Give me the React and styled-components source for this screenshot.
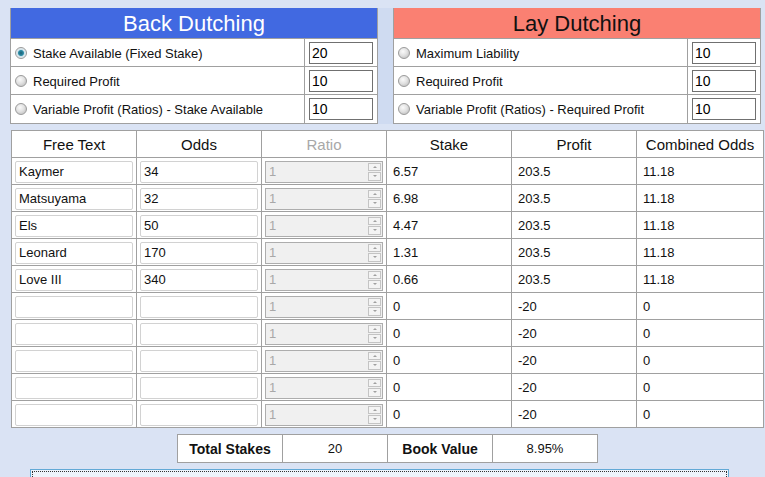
import styled, { createGlobalStyle } from 'styled-components';

const GlobalStyle = createGlobalStyle`
  body {
    margin: 0;
    background: #dae3f4;
    font-family: "Liberation Sans", Arial, sans-serif;
    overflow: hidden;
  }
`;

const Page = styled.div`
  width: 765px;
  height: 477px;
  padding: 8px 0 0 10px;
  box-sizing: border-box;
`;

const TopRow = styled.div`
  display: grid;
  grid-template-columns: 368px 368px;
  gap: 15px;
  width: 751px;
  background: #cfdbf1;
`;

const Panel = styled.div`
  border: 1px solid #a0a0a0;
  border-top: none;
  background: #fff;
`;

const PanelHeader = styled.div`
  height: 30px;
  line-height: 31px;
  text-align: center;
  font-size: 22px;
  background: ${(p) => (p.$lay ? '#fa8072' : '#4169e1')};
  color: ${(p) => (p.$lay ? '#111' : '#fff')};
`;

const OptionRow = styled.div`
  display: grid;
  grid-template-columns: 1fr 72px;
  height: 28px;
  box-sizing: border-box;
  border-top: 1px solid #a0a0a0;
  &:last-child {
    height: 29px;
  }
`;

const OptionLabel = styled.label`
  display: flex;
  align-items: center;
  gap: 6px;
  padding-left: 4px;
  font-size: 13px;
  color: #111;
  border-right: 1px solid #a0a0a0;
`;

const Radio = styled.span`
  width: 12px;
  height: 12px;
  border-radius: 50%;
  box-sizing: border-box;
  border: 1px solid #9a9a9a;
  background: ${(p) =>
    p.$checked
      ? 'radial-gradient(circle, #1f5f74 0, #2c8ca6 2.5px, #cfe2ea 3.5px, #f4f4f4 6px)'
      : 'radial-gradient(circle at 40% 35%, #fafafa 0, #e2e2e2 4px, #cfcfcf 6px)'};
`;

const OptionInput = styled.div`
  margin: 3px 4px;
  border: 1px solid #707070;
  font-size: 14px;
  line-height: 20px;
  padding-left: 2px;
  color: #000;
`;

const Grid = styled.table`
  margin: 6px 0 0 1px;
  border-collapse: collapse;
  background: #fff;
  table-layout: fixed;
  width: 752px;
`;

const HeadCell = styled.th`
  height: 26px;
  padding: 0;
  border: 1px solid #a0a0a0;
  font-weight: normal;
  font-size: 15px;
  color: ${(p) => (p.$disabled ? '#a8a8a8' : '#111')};
`;

const Cell = styled.td`
  height: 25px;
  padding: ${(p) => (p.$box ? '1px 3px 0' : '1px 0 0 6px')};
  border: 1px solid #a0a0a0;
  font-size: 13px;
  color: #111;
`;

const TextBox = styled.div`
  height: 22px;
  box-sizing: border-box;
  border: 1px solid #d2d2d2;
  border-radius: 2px;
  padding-left: 3px;
  line-height: 20px;
  font-size: 13px;
  color: #111;
`;

const SpinBox = styled.div`
  height: 22px;
  box-sizing: border-box;
  border: 1px solid #adadad;
  background: #f0f0f0;
  display: flex;
  align-items: stretch;
  padding-left: 3px;
  font-size: 13px;
  line-height: 20px;
  color: #a8a8a8;
`;

const SpinValue = styled.span`
  flex: 1;
`;

const SpinButtons = styled.div`
  width: 13px;
  margin: 1px;
  display: flex;
  flex-direction: column;
  gap: 1px;
`;

const SpinArrow = styled.div`
  flex: 1;
  border: 1px solid #c4c4c4;
  background: #f4f4f4;
  display: flex;
  align-items: center;
  justify-content: center;
  &::after {
    content: '';
    border-left: 2.5px solid transparent;
    border-right: 2.5px solid transparent;
    ${(p) => (p.$down ? 'border-top: 2.5px solid #a0a0a0;' : 'border-bottom: 2.5px solid #a0a0a0;')}
  }
`;

const Totals = styled.table`
  margin: 6px 0 0 167px;
  border-collapse: collapse;
  background: #fff;
  table-layout: fixed;
  width: 421px;
`;

const TotalCell = styled.td`
  width: 104px;
  height: 27px;
  padding: 0;
  border: 1px solid #a0a0a0;
  text-align: center;
  font-size: ${(p) => (p.$label ? '14px' : '13px')};
  font-weight: ${(p) => (p.$label ? 'bold' : 'normal')};
  color: #111;
`;

const Notes = styled.div`
  margin: 6px 0 0 20px;
  width: 699px;
  height: 20px;
  box-sizing: border-box;
  border: 1px solid #62a9d6;
  background: #eef3fb;
  outline: 1px dotted #333;
  outline-offset: -3px;
`;

const backOptions = [
  { label: 'Stake Available (Fixed Stake)', value: '20', checked: true },
  { label: 'Required Profit', value: '10' },
  { label: 'Variable Profit (Ratios) - Stake Available', value: '10' },
];

const layOptions = [
  { label: 'Maximum Liability', value: '10' },
  { label: 'Required Profit', value: '10' },
  { label: 'Variable Profit (Ratios) - Required Profit', value: '10' },
];

const runners = [
  { name: 'Kaymer', odds: '34', stake: '6.57', profit: '203.5', combined: '11.18' },
  { name: 'Matsuyama', odds: '32', stake: '6.98', profit: '203.5', combined: '11.18' },
  { name: 'Els', odds: '50', stake: '4.47', profit: '203.5', combined: '11.18' },
  { name: 'Leonard', odds: '170', stake: '1.31', profit: '203.5', combined: '11.18' },
  { name: 'Love III', odds: '340', stake: '0.66', profit: '203.5', combined: '11.18' },
  ...Array.from({ length: 5 }, () => ({ name: '', odds: '', stake: '0', profit: '-20', combined: '0' })),
];

function OptionPanel({ title, options, lay }) {
  return (
    <Panel>
      <PanelHeader $lay={lay}>{title}</PanelHeader>
      {options.map((o) => (
        <OptionRow key={o.label}>
          <OptionLabel>
            <Radio $checked={o.checked} />
            {o.label}
          </OptionLabel>
          <OptionInput>{o.value}</OptionInput>
        </OptionRow>
      ))}
    </Panel>
  );
}

export default function App() {
  return (
    <Page>
      <GlobalStyle />
      <TopRow>
        <OptionPanel title="Back Dutching" options={backOptions} />
        <OptionPanel title="Lay Dutching" options={layOptions} lay />
      </TopRow>

      <Grid>
        <colgroup>
          <col style={{ width: 125 }} />
          <col style={{ width: 125 }} />
          <col style={{ width: 125 }} />
          <col style={{ width: 125 }} />
          <col style={{ width: 125 }} />
          <col style={{ width: 127 }} />
        </colgroup>
        <thead>
          <tr>
            <HeadCell>Free Text</HeadCell>
            <HeadCell>Odds</HeadCell>
            <HeadCell $disabled>Ratio</HeadCell>
            <HeadCell>Stake</HeadCell>
            <HeadCell>Profit</HeadCell>
            <HeadCell>Combined Odds</HeadCell>
          </tr>
        </thead>
        <tbody>
          {runners.map((r, i) => (
            <tr key={i}>
              <Cell $box><TextBox>{r.name}</TextBox></Cell>
              <Cell $box><TextBox>{r.odds}</TextBox></Cell>
              <Cell $box>
                <SpinBox>
                  <SpinValue>1</SpinValue>
                  <SpinButtons>
                    <SpinArrow />
                    <SpinArrow $down />
                  </SpinButtons>
                </SpinBox>
              </Cell>
              <Cell>{r.stake}</Cell>
              <Cell>{r.profit}</Cell>
              <Cell>{r.combined}</Cell>
            </tr>
          ))}
        </tbody>
      </Grid>

      <Totals>
        <tbody>
          <tr>
            <TotalCell $label>Total Stakes</TotalCell>
            <TotalCell>20</TotalCell>
            <TotalCell $label>Book Value</TotalCell>
            <TotalCell>8.95%</TotalCell>
          </tr>
        </tbody>
      </Totals>

      <Notes />
    </Page>
  );
}
